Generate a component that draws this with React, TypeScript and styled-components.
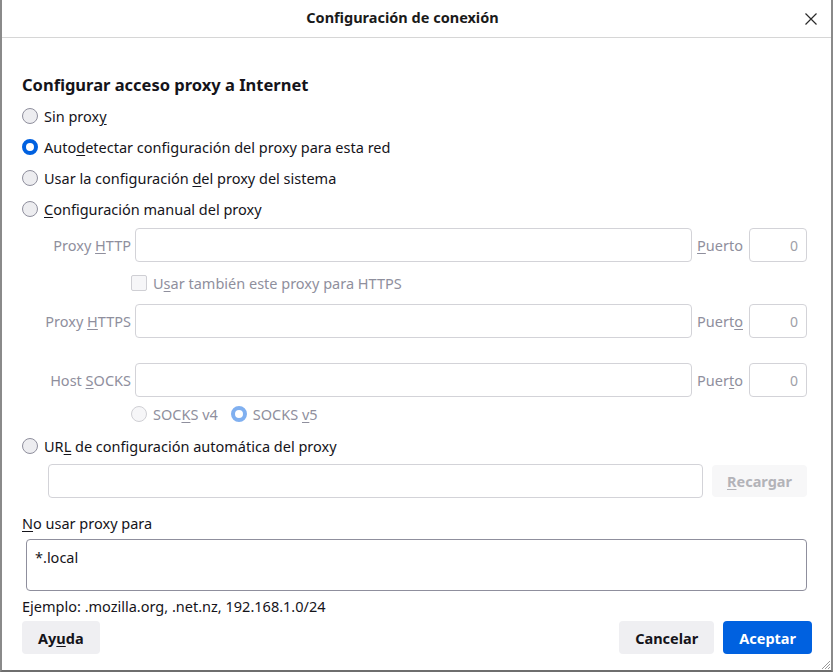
import * as React from 'react';
import styled, { createGlobalStyle, css } from 'styled-components';

const GlobalStyle = createGlobalStyle`
  html, body {
    margin: 0;
    padding: 0;
    background: #6b6b6b;
  }
  body {
    font-family: "Noto Sans", "Open Sans", sans-serif;
    color: #15141a;
  }
`;

const Dialog = styled.div`
  position: relative;
  box-sizing: border-box;
  width: 833px;
  height: 672px;
  background: #ffffff;
  border-left: 2px solid #8a8a8a;
  border-right: 2px solid #8a8a8a;
  border-bottom: 2px solid #6e6e6e;
  display: flex;
  flex-direction: column;
  overflow: hidden;
`;

const TitleBar = styled.div`
  height: 37px;
  border-bottom: 1px solid #d6d6d6;
  display: flex;
  align-items: center;
  justify-content: center;
  padding-right: 28px;
  position: relative;
  flex-shrink: 0;
`;

const TitleText = styled.div`
  font-size: 14.5px;
  font-weight: 700;
  color: #1a1a1a;
  margin-top: -3px;
`;

const CloseButton = styled.div`
  position: absolute;
  right: 13px;
  top: 9px;
  width: 14px;
  height: 14px;
`;

const Content = styled.div`
  flex: 1;
  display: flex;
  flex-direction: column;
  padding: 0 24px 0 20px;
`;

const Heading = styled.h1`
  margin: 35px 0 3px 0;
  font-size: 16.5px;
  line-height: 24px;
  font-weight: 700;
`;

const OptionRow = styled.label<{ $h?: number }>`
  display: flex;
  align-items: center;
  height: ${(p) => p.$h ?? 31}px;
  font-size: 14.5px;
  gap: 6px;
`;

const RadioDot = styled.span<{ $checked?: boolean; $disabled?: boolean }>`
  box-sizing: border-box;
  width: 16px;
  height: 16px;
  border-radius: 50%;
  flex-shrink: 0;
  ${(p) =>
    p.$checked
      ? css`
          background: #ffffff;
          border: 4px solid ${p.$disabled ? '#80b0f0' : '#0061e0'};
        `
      : css`
          background: ${p.$disabled ? '#f6f6f8' : '#ededf0'};
          border: 1px solid ${p.$disabled ? '#cfcfd4' : '#8f8f9d'};
        `}
`;

const CheckBox = styled.span`
  box-sizing: border-box;
  width: 16px;
  height: 16px;
  border-radius: 2px;
  border: 1px solid #cfcfd4;
  background: #f6f6f8;
  flex-shrink: 0;
`;

const Key = styled.span`
  text-decoration: underline;
  text-underline-offset: 2px;
`;

const ManualGrid = styled.div`
  display: grid;
  grid-template-columns: 109px 1fr auto 58px;
  column-gap: 4px;
  align-items: center;
  margin-top: 4px;
  color: #8f8f9d;
  font-size: 14.5px;
`;

const FieldLabel = styled.div`
  text-align: right;
`;

const TextBox = styled.div<{ $dark?: boolean; $h?: number }>`
  box-sizing: border-box;
  height: ${(p) => p.$h ?? 34}px;
  border: 1px solid ${(p) => (p.$dark ? '#8f8f9d' : '#d3d3d8')};
  border-radius: 4px;
  background: #ffffff;
`;

const PortBox = styled(TextBox)`
  display: flex;
  align-items: center;
  justify-content: flex-end;
  padding-right: 8px;
  color: #a0a0a8;
  font-size: 14px;
`;

const PortLabel = styled.div`
  padding: 0 2px 0 1px;
`;

const SubRow = styled.div<{ $h: number; $gap?: number }>`
  grid-column: 2 / 5;
  display: flex;
  align-items: center;
  height: ${(p) => p.$h}px;
  margin-left: -4px;
  gap: ${(p) => p.$gap ?? 0}px;
`;

const SubOption = styled.span`
  display: flex;
  align-items: center;
  gap: 6px;
`;

const Spacer = styled.div<{ $h: number }>`
  grid-column: 1 / 5;
  height: ${(p) => p.$h}px;
`;

const UrlRow = styled.div`
  display: flex;
  align-items: center;
  gap: 9px;
  margin: 3px 0 0 26px;
`;

const UrlInput = styled(TextBox)`
  flex: 1;
`;

const Button = styled.button<{ $variant?: 'primary' | 'disabled' | 'plain' }>`
  font-family: inherit;
  font-size: 14.5px;
  font-weight: 700;
  height: 33px;
  border: none;
  border-radius: 4px;
  padding: 0 16px;
  cursor: default;
  ${(p) =>
    p.$variant === 'primary'
      ? css`
          background: #0061e0;
          color: #ffffff;
        `
      : p.$variant === 'disabled'
      ? css`
          background: #f7f7f8;
          color: #b3b3b8;
          height: 32px;
          padding: 0 15px;
        `
      : css`
          background: #efeff2;
          color: #15141a;
        `}
`;

const PlainText = styled.div<{ $mt: number }>`
  margin-top: ${(p) => p.$mt}px;
  font-size: 14.5px;
  line-height: 20px;
`;

const ExceptionsBox = styled(TextBox)`
  margin: 6px 0 0 4px;
  padding: 8px 8px;
  font-size: 14.5px;
  line-height: 18px;
`;

const Footer = styled.div`
  display: flex;
  align-items: center;
  margin: 5px -5px 0 0;
`;

const FooterRight = styled.div`
  margin-left: auto;
  display: flex;
  gap: 9px;
`;

const Grip = styled.svg`
  position: absolute;
  right: 0;
  bottom: 0;
`;

const Radio: React.FC<{ checked?: boolean; disabled?: boolean; children: React.ReactNode }> = ({
  checked,
  disabled,
  children,
}) => (
  <OptionRow>
    <RadioDot $checked={checked} $disabled={disabled} />
    <span>{children}</span>
  </OptionRow>
);

const ProxyRow: React.FC<{ label: React.ReactNode; port: React.ReactNode }> = ({ label, port }) => (
  <>
    <FieldLabel>{label}</FieldLabel>
    <TextBox />
    <PortLabel>{port}</PortLabel>
    <PortBox>0</PortBox>
  </>
);

const App: React.FC = () => {
  return (
    <Dialog>
      <GlobalStyle />
      <TitleBar>
        <TitleText>Configuración de conexión</TitleText>
        <CloseButton>
          <svg width="14" height="14" viewBox="0 0 14 14">
            <path d="M1.5 1.5 L12.5 12.5 M12.5 1.5 L1.5 12.5" stroke="#2a2a2a" strokeWidth="1.2" />
          </svg>
        </CloseButton>
      </TitleBar>

      <Content>
        <Heading>Configurar acceso proxy a Internet</Heading>
        <Radio>
          Sin prox<Key>y</Key>
        </Radio>
        <Radio checked>
          Auto<Key>d</Key>etectar configuración del proxy para esta red
        </Radio>
        <Radio>
          Usar la configuración <Key>d</Key>el proxy del sistema
        </Radio>
        <Radio>
          <Key>C</Key>onfiguración manual del proxy
        </Radio>

        <ManualGrid>
          <ProxyRow
            label={
              <>
                Proxy <Key>H</Key>TTP
              </>
            }
            port={
              <>
                <Key>P</Key>uerto
              </>
            }
          />
          <SubRow $h={42}>
            <SubOption>
              <CheckBox />
              <span>
                U<Key>s</Key>ar también este proxy para HTTPS
              </span>
            </SubOption>
          </SubRow>
          <ProxyRow
            label={
              <>
                Proxy <Key>H</Key>TTPS
              </>
            }
            port={
              <>
                Puert<Key>o</Key>
              </>
            }
          />
          <Spacer $h={25} />
          <ProxyRow
            label={
              <>
                Host <Key>S</Key>OCKS
              </>
            }
            port={
              <>
                Puer<Key>t</Key>o
              </>
            }
          />
          <SubRow $h={34} $gap={13}>
            <SubOption>
              <RadioDot $disabled />
              <span>
                SOC<Key>K</Key>S v4
              </span>
            </SubOption>
            <SubOption>
              <RadioDot $checked $disabled />
              <span>
                SOCKS <Key>v</Key>5
              </span>
            </SubOption>
          </SubRow>
        </ManualGrid>

        <OptionRow $h={30}>
          <RadioDot />
          <span>
            UR<Key>L</Key> de configuración automática del proxy
          </span>
        </OptionRow>
        <UrlRow>
          <UrlInput />
          <Button $variant="disabled">
            <Key>R</Key>ecargar
          </Button>
        </UrlRow>

        <PlainText $mt={15}>
          <Key>N</Key>o usar proxy para
        </PlainText>
        <ExceptionsBox $dark $h={52}>
          *.local
        </ExceptionsBox>
        <PlainText $mt={5}>Ejemplo: .mozilla.org, .net.nz, 192.168.1.0/24</PlainText>

        <Footer>
          <Button>
            Ay<Key>u</Key>da
          </Button>
          <FooterRight>
            <Button>Cancelar</Button>
            <Button $variant="primary">Aceptar</Button>
          </FooterRight>
        </Footer>
      </Content>

      <Grip width="12" height="12" viewBox="0 0 12 12">
        <path d="M11 3 L3 11 M11 6 L6 11 M11 9 L9 11" stroke="#9a9a9a" strokeWidth="1" />
      </Grip>
    </Dialog>
  );
};

export default App;
